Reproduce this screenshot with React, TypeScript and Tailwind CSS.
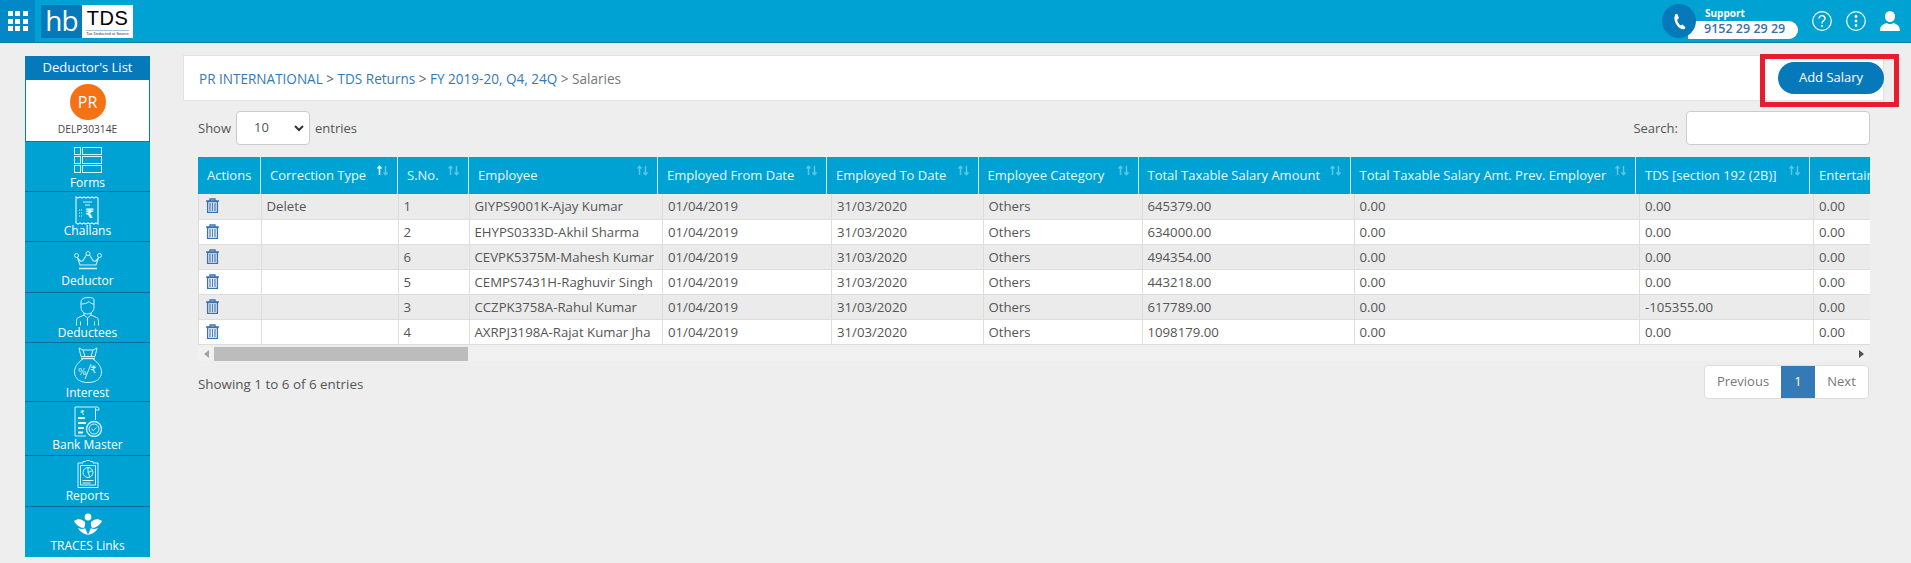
import React from "react";

const headCols = [62.5, 137, 71, 189, 169, 151.5, 160, 212, 285.5, 174, 200];
const bodyCols = [62.5, 137, 71, 193.5, 169, 151.5, 159, 212, 285.5, 174, 200];
const heads = ["Actions", "Correction Type", "S.No.", "Employee", "Employed From Date", "Employed To Date", "Employee Category", "Total Taxable Salary Amount", "Total Taxable Salary Amt. Prev. Employer", "TDS [section 192 (2B)]", "Entertainment Allowance"];
const rows = [
  ["Delete", "1", "GIYPS9001K-Ajay Kumar", "645379.00", "0.00"],
  ["", "2", "EHYPS0333D-Akhil Sharma", "634000.00", "0.00"],
  ["", "6", "CEVPK5375M-Mahesh Kumar", "494354.00", "0.00"],
  ["", "5", "CEMPS7431H-Raghuvir Singh", "443218.00", "0.00"],
  ["", "3", "CCZPK3758A-Rahul Kumar", "617789.00", "-105355.00"],
  ["", "4", "AXRPJ3198A-Rajat Kumar Jha", "1098179.00", "0.00"],
];

function Sort({ active }: { active?: boolean }) {
  return (
    <svg width="13" height="11" viewBox="0 0 13 11" className="absolute right-[8px] top-[8px]" fill="none" strokeWidth="1.5">
      <path d="M3.5 10V1.5M1.5 3.5l2-2.2 2 2.2" stroke={active ? "#ffffff" : "#5cc6e6"} />
      <path d="M9.5 1v8.5M7.5 7.5l2 2.2 2-2.2" stroke="#5cc6e6" />
    </svg>
  );
}

function Trash() {
  return (
    <svg width="13" height="15" viewBox="0 0 13 15" fill="none" stroke="#3a72ae" className="ml-[7px] mt-[4px]">
      <path d="M0 3h13" strokeWidth="1.4" />
      <path d="M4 3V1h5v2" strokeWidth="1.3" />
      <path d="M1.600 3.500h9.800V14.300H1.600z" strokeWidth="1.300" />
      <path d="M4 5v8M6.500 5v8M9 5v8" strokeWidth="1.300" stroke="#4f83bb" />
    </svg>
  );
}

const S = { fill: "none", stroke: "#d6f2fc", strokeWidth: 1 };

function FormsIcon() {
  return (
    <svg width="28" height="26" viewBox="0 0 28 26" {...S}>
      {[0.5, 9.5, 18.5].map((y) => (
        <g key={y}>
          <rect x="0.5" y={y} width="6" height="7" />
          <rect x="8.5" y={y} width="19" height="7" />
        </g>
      ))}
    </svg>
  );
}
function ChallanIcon() {
  return (
    <svg width="25" height="29" viewBox="0 0 25 29" {...S}>
      <path d="M1 1l2 1 2-1 2 1 2-1 2 1 2-1 2 1 2-1 2 1 2-1 2 1v26l-2-1-2 1-2-1-2 1-2-1-2 1-2-1-2 1-2-1-2 1-2-1z" strokeWidth="1.2" />
      <path d="M8 6h9M10 9h5" />
      <path d="M4 14h4M4 17h4M4 20h4" strokeDasharray="1 1" />
      <text x="10" y="22" fontSize="13" fontWeight="700" fill="#e6f8ff" stroke="none" fontFamily="DejaVu Sans">₹</text>
    </svg>
  );
}
function CrownIcon() {
  return (
    <svg width="28" height="19" viewBox="0 0 28 19" {...S}>
      <circle cx="2.5" cy="4.5" r="2" />
      <circle cx="14" cy="2.5" r="2" />
      <circle cx="25.5" cy="4.5" r="2" />
      <path d="M3.5 6.5C5 10 8 12 10 8l2.5-4M24.500 6.500C23 10 20 12 18 8l-2.500-4M3.500 6.500L6 14h16l2.500-7.500" strokeWidth="1.1" />
      <path d="M5 17.500h18" strokeWidth="1.6" />
    </svg>
  );
}
function PersonIcon() {
  return (
    <svg width="23" height="29" viewBox="0 0 23 29" {...S}>
      <path d="M5 5c0-3 3-4.500 7-4.500 3 0 6 .5 6 2V10c0 4-3 7-6.500 7S5 14 5 10z" />
      <path d="M5 7c3 0 6-.5 8-2.500 1 1.500 3 2.500 5 2.500" />
      <path d="M8 16v2L1.500 21c-1 .6-1 3-1 7.500M15 16v2l6.500 3c1 .6 1 3 1 7.500M8 18l3.500 3 3.500-3M11.500 21v7.500M4.500 28.500v-4M18.500 28.500v-4" />
    </svg>
  );
}
function BagIcon() {
  return (
    <svg width="28" height="36" viewBox="0 0 28 36" {...S}>
      <path d="M5 1l4 2h10l4-2-2 8.500H7zM9 3l2 6.500M19 3l-2 6.500" />
      <path d="M7 11.500h14" strokeWidth="1.400" />
      <path d="M9 12C3 16 .5 21 .5 25c0 7 6 10.500 13.500 10.500S27.500 32 27.500 25c0-4-2.500-9-8.500-13" />
      <path d="M17 17L11 32" />
      <text x="4" y="28" fontSize="9" fill="#d6f2fc" stroke="none" fontFamily="DejaVu Sans">%</text>
      <text x="16" y="26" fontSize="10" fill="#d6f2fc" stroke="none" fontFamily="DejaVu Sans">₹</text>
    </svg>
  );
}
function BankIcon() {
  return (
    <svg width="28" height="31" viewBox="0 0 28 31" {...S}>
      <path d="M1 1h22c1.500 0 2 1 2 3h-3.500M1 1v29h11M21.500 2v12" />
      <text x="6" y="9" fontSize="7" fill="#e6f8ff" stroke="none" fontFamily="DejaVu Sans">₹</text>
      <path d="M4 12h7M4 17h8M4 22h6M4 26.500h5" strokeWidth="2" stroke="#e6f8ff" />
      <circle cx="20" cy="23" r="7.500" strokeWidth="1.300" />
      <circle cx="20" cy="23" r="5" />
      <path d="M17.500 23l2 1.500 3-3" stroke="#e6f8ff" />
    </svg>
  );
}
function ReportIcon() {
  return (
    <svg width="22" height="28" viewBox="0 0 22 28" {...S}>
      <path d="M1 3h5V1.500h2.500l1-1h3l1 1H16V3h5v24.500H1z" />
      <path d="M3.500 5.500h15v19.500h-15z" />
      <circle cx="11" cy="12.500" r="5" />
      <path d="M11 12.500l4.500-2M11 12.500l2 4.500M11 7.500v5" />
      <path d="M5.500 20.500h11M5.500 23h8" stroke="#e6f8ff" />
    </svg>
  );
}
function TracesIcon() {
  return (
    <svg width="28" height="22" viewBox="0 0 28 22" fill="#ffffff">
      <circle cx="14" cy="4" r="3.400" />
      <path d="M0 8c4-3 8-2 11 1 .5 3-.5 5-1 6C6 15 2 12 0 8z" />
      <path d="M28 8c-4-3-8-2-11 1-.5 3 .5 5 1 6 4 0 8-3 10-7z" />
      <path d="M4 15c3 1 5 1.500 7 0 1 2 2 4 3 7-4-1-8-3-10-7zM24 15c-3 1-5 1.500-7 0-1 2-2 4-3 7 4-1 8-3 10-7z" />
    </svg>
  );
}

const nav: { label: string; h: string; pt: string; gap: string; icon: React.ReactNode }[] = [
  { label: "Forms", h: "h-[50px]", pt: "pt-[5px]", gap: "mt-[2px]", icon: <FormsIcon /> },
  { label: "Challans", h: "h-[50px]", pt: "pt-[4px]", gap: "mt-[-2px]", icon: <ChallanIcon /> },
  { label: "Deductor", h: "h-[51px]", pt: "pt-[9px]", gap: "mt-[3px]", icon: <CrownIcon /> },
  { label: "Deductees", h: "h-[50px]", pt: "pt-[4px]", gap: "mt-[-1px]", icon: <PersonIcon /> },
  { label: "Interest", h: "h-[59px]", pt: "pt-[4px]", gap: "mt-[2px]", icon: <BagIcon /> },
  { label: "Bank Master", h: "h-[54px]", pt: "pt-[4px]", gap: "mt-[0px]", icon: <BankIcon /> },
  { label: "Reports", h: "h-[51px]", pt: "pt-[4px]", gap: "mt-[0px]", icon: <ReportIcon /> },
  { label: "TRACES Links", h: "h-[50px]", pt: "pt-[6px]", gap: "mt-[3px]", icon: <TracesIcon /> },
];

export default function App() {
  return (
    <div className="h-[563px] w-[1911px] overflow-hidden bg-[#eeeeee] font-['Open_Sans',sans-serif] text-[13px] text-[#555555]">
      <header className="flex h-[43px] items-center border-b border-[#0a7fa8] bg-[#00a2d3]">
        <div className="flex h-[42px] w-[35px] items-center justify-center bg-[#0288c7]">
          <div className="grid grid-cols-3 gap-[2.5px]">
            {Array.from({ length: 9 }).map((_, i) => (
              <span key={i} className="h-[5px] w-[5px] bg-white" />
            ))}
          </div>
        </div>
        <div className="ml-[6px] flex h-[33px] w-[92px]">
          <div className="flex w-[41px] items-center justify-center bg-[#0679bb] pb-[2px] text-[28px] leading-none tracking-[-1px] text-white">hb</div>
          <div className="flex flex-1 flex-col items-center bg-white pt-[3px] font-['Liberation_Sans',sans-serif] text-black">
            <span className="text-[20px] leading-[20px] tracking-[0.5px]">TDS</span>
            <span className="mt-[2px] border-t border-[#9fc4dd] text-[4px] leading-[6px] text-[#333333]">Tax Deducted at Source</span>
          </div>
        </div>
        <div className="ml-auto flex items-center">
          <div className="relative flex h-[35px] w-[136px] items-center">
            <div className="z-10 flex h-[34px] w-[34px] items-center justify-center rounded-full bg-[#0679bb]">
              <svg width="14" height="17" viewBox="0 0 24 28" fill="#ffffff">
                <path d="M6 1l3 0 3 7-3 3c0 4 3 8 6 10l3-2 5 5-1 3c-9 2-18-9-18-20z" />
              </svg>
            </div>
            <div className="ml-[-8px] mt-[17px] flex h-[18px] flex-1 items-center whitespace-nowrap rounded-r-full bg-white pl-[16px] text-[12.5px] font-semibold leading-none text-[#3d6ea5]">
              9152 29 29 29
            </div>
            <span className="absolute left-[43px] top-[1px] text-[10px] font-bold leading-[16px] text-white">Support</span>
          </div>
          <svg width="20" height="20" viewBox="0 0 20 20" fill="none" stroke="#ffffff" className="ml-[14px]">
            <circle cx="10" cy="10" r="9.300" strokeWidth="1.200" />
            <path d="M7 7.500c0-4 6.200-3.700 6 0 0 2.300-3 2.300-3 5" strokeWidth="1.400" />
            <circle cx="10" cy="15" r="1" fill="#ffffff" stroke="none" />
          </svg>
          <svg width="20" height="20" viewBox="0 0 20 20" fill="none" stroke="#ffffff" className="ml-[14px]">
            <circle cx="10" cy="10" r="9.300" strokeWidth="1.200" />
            <circle cx="10" cy="5.500" r="1.400" fill="#ffffff" stroke="none" />
            <circle cx="10" cy="10" r="1.400" fill="#ffffff" stroke="none" />
            <circle cx="10" cy="14.500" r="1.400" fill="#ffffff" stroke="none" />
          </svg>
          <svg width="20" height="20" viewBox="0 0 20 20" fill="#ffffff" className="ml-[14px] mr-[11px]">
            <ellipse cx="10" cy="5.500" rx="5" ry="5.500" />
            <path d="M0 20c0-6 4-7 6.500-8 2 1.500 5 1.500 7 0C16 13 20 14 20 20z" />
          </svg>
        </div>
      </header>

      <div className="relative flex pl-[25px] pt-[13px]">
        <aside className="w-[125px] shrink-0 bg-[#00a2d3] text-white">
          <div className="flex h-[24px] items-center justify-center bg-[#0679bb] text-[13px]">Deductor's List</div>
          <div className="flex h-[62px] flex-col items-center border border-t-0 border-[#0679bb] bg-white pt-[4px]">
            <div className="flex h-[36px] w-[36px] items-center justify-center rounded-full bg-[#f47216] text-[16px] text-white">PR</div>
            <span className="mt-[2px] text-[10.2px] font-medium leading-[14px] text-[#444444]">DELP30314E</span>
          </div>
          {nav.map((n, i) => (
            <div
              key={n.label}
              className={`flex flex-col items-center ${n.h} ${n.pt} ${i < nav.length - 1 ? "border-b border-[#0a6f96]" : ""}`}
            >
              {n.icon}
              <span className={`${n.gap} text-[12px] leading-[16px]`}>{n.label}</span>
            </div>
          ))}
        </aside>

        <main className="ml-[33px] mt-[-1px] w-[1701px]">
          <div className="flex h-[46px] items-center justify-between border border-[#e2e2e2] bg-white pl-[15px]">
            <div className="pt-[3px] text-[13.55px] text-[#337ab7]">
              PR INTERNATIONAL <span className="text-[#666666]">&gt;</span> TDS Returns <span className="text-[#666666]">&gt;</span> FY 2019-20, Q4, 24Q <span className="text-[#777777]">&gt; Salaries</span>
            </div>
            <button className="-mr-px h-[32px] w-[106px] rounded-full bg-[#0679bb] text-[13px] text-white">Add Salary</button>
          </div>

          <div className="ml-[15px] mr-[14px]">
            <div className="mt-[10px] flex h-[34px] items-center">
              <span className="pt-[1px]">Show</span>
              <div className="ml-[5px] flex h-[34px] w-[74px] items-center justify-between rounded border border-[#cccccc] bg-white pl-[17px] pr-[5px]">
                <span>10</span>
                <svg width="10" height="7" viewBox="0 0 10 7" fill="none" stroke="#333333" strokeWidth="2"><path d="M1 1l4 4 4-4" /></svg>
              </div>
              <span className="ml-[5px] pt-[1px]">entries</span>
              <span className="ml-auto pt-[1px]">Search:</span>
              <div className="ml-[8px] h-[34px] w-[184px] rounded border border-[#cccccc] bg-white" />
            </div>

            <div className="mt-[12px] w-[1672px] overflow-hidden">
              <table className="w-[1802px] table-fixed border-collapse">
                <colgroup>{headCols.map((w, i) => <col key={i} style={{ width: w }} />)}</colgroup>
                <thead>
                  <tr className="h-[37px] bg-[#00a2d3] text-[#eaf8fd]">
                    {heads.map((h, i) => (
                      <th key={h} className="relative overflow-hidden whitespace-nowrap border-r border-[#cfeaf5] pl-[9px] text-left font-normal">
                        {h}
                        {i > 0 && <Sort active={i === 1} />}
                      </th>
                    ))}
                  </tr>
                </thead>
              </table>
              <table className="w-[1806px] table-fixed border-collapse text-[13.2px]">
                <colgroup>{bodyCols.map((w, i) => <col key={i} style={{ width: w }} />)}</colgroup>
                <tbody>
                  {rows.map((r, i) => {
                    const cells = [r[0], r[1], r[2], "01/04/2019", "31/03/2020", "Others", r[3], "0.00", r[4], "0.00"];
                    return (
                      <tr key={i} className={`h-[25px] border-b border-[#dddddd] ${i % 2 === 0 ? "bg-[#ebebeb]" : "bg-white"}`}>
                        <td className="border-x border-[#dddddd] p-0 align-top"><Trash /></td>
                        {cells.map((c, j) => (
                          <td key={j} className="overflow-hidden whitespace-nowrap border-r border-[#dddddd] px-[5px] pb-0 pt-[2px]">{c}</td>
                        ))}
                      </tr>
                    );
                  })}
                </tbody>
              </table>
              <div className="mt-[2px] flex h-[14px] items-center bg-[#f1f1f1]">
                <svg width="5" height="8" viewBox="0 0 5 8" className="ml-[6px]" fill="#a3a3a3"><path d="M5 0v8L0 4z" /></svg>
                <div className="ml-[5px] h-[14px] w-[254px] bg-[#bcbcbc]" />
                <svg width="5" height="8" viewBox="0 0 5 8" className="ml-auto mr-[6px]" fill="#505050"><path d="M0 0v8l5-4z" /></svg>
              </div>
            </div>

            <div className="mt-[4px] flex w-[1672px] items-center justify-between">
              <span className="mt-[6px] text-[13.4px]">Showing 1 to 6 of 6 entries</span>
              <div className="mr-[1px] flex h-[34px] overflow-hidden rounded border border-[#dddddd] bg-white">
                <span className="flex w-[76px] items-center justify-center text-[#777777]">Previous</span>
                <span className="flex w-[34px] items-center justify-center bg-[#337ab7] text-white">1</span>
                <span className="flex w-[53px] items-center justify-center text-[#777777]">Next</span>
              </div>
            </div>
          </div>
        </main>

        <div className="absolute left-[1760px] top-[11px] h-[53px] w-[139px] border-[5px] border-[#e81c2c]" />
      </div>
    </div>
  );
}
